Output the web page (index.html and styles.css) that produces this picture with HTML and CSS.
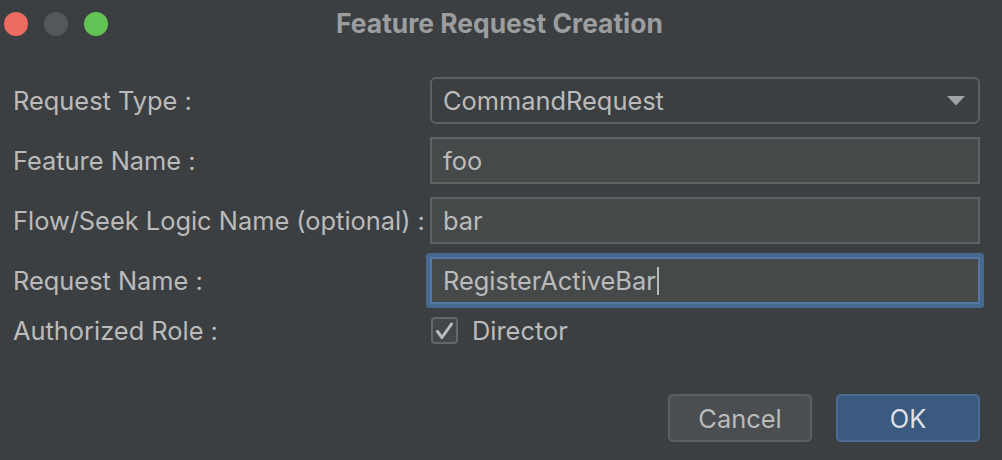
FILE: index.html
```html
<!DOCTYPE html>
<html>
<head>
<meta charset="utf-8">
<link rel="stylesheet" href="styles.css">
</head>
<body>
<div class="window">
  <div class="titlebar">
    <div class="lights">
      <span class="light red"></span>
      <span class="light grey"></span>
      <span class="light green"></span>
    </div>
    <div class="title">Feature Request Creation</div>
    <div></div>
  </div>
  <div class="form">
    <div class="label">Request Type :</div>
    <div class="combo">
      <span>CommandRequest</span>
      <svg class="arrow" width="18" height="10" viewBox="0 0 18 10"><polygon points="0,0 18,0 9,9.5" fill="#a0a3a7"/></svg>
    </div>
    <div class="label">Feature Name :</div>
    <div class="field">foo</div>
    <div class="label">Flow/Seek Logic Name (optional) :</div>
    <div class="field">bar</div>
    <div class="label">Request Name :</div>
    <div class="field focused">RegisterActiveBar<span class="caret"></span></div>
    <div class="label check-label">Authorized Role :</div>
    <div class="check-row">
      <span class="checkbox">
        <svg width="27" height="27" viewBox="0 0 27 27"><polyline points="6.5,14.5 11,20.5 20.5,7" fill="none" stroke="#bbbbbb" stroke-width="3" stroke-linecap="round" stroke-linejoin="round"/></svg>
      </span>
      <span class="check-text">Director</span>
    </div>
  </div>
  <div class="buttons">
    <div class="btn cancel">Cancel</div>
    <div class="btn ok">OK</div>
  </div>
</div>
</body>
</html>
```
FILE: styles.css
```css
html, body {
  margin: 0;
  padding: 0;
  background: #3c3f41;
}
.window {
  width: 1002px;
  height: 460px;
  background: #3c3f41;
  font-family: "Inter", "Noto Sans", sans-serif;
  color: #bbbbbb;
  font-size: 25.4px;
  overflow: hidden;
}
.titlebar {
  height: 45px;
  display: grid;
  grid-template-columns: 1fr auto 1fr;
  align-items: center;
}
.lights {
  display: flex;
  gap: 16px;
  padding-left: 4px;
  padding-top: 3px;
}
.light {
  width: 24px;
  height: 24px;
  border-radius: 50%;
  display: block;
}
.red { background: #ec6a5e; }
.grey { background: #54575b; }
.green { background: #61c454; }
.title {
  font-weight: 700;
  font-size: 26.4px;
  color: #9c9d9f;
  padding-right: 3px;
}
.form {
  display: grid;
  grid-template-columns: 417px 550px;
  grid-template-rows: 47px 47px 47px 47px 28px;
  row-gap: 13px;
  padding: 32px 0 0 13px;
}
.label {
  display: flex;
  align-items: center;
  white-space: nowrap;
}
.combo {
  box-sizing: border-box;
  border: 2px solid #5d6063;
  border-radius: 6px;
  display: flex;
  align-items: center;
  justify-content: space-between;
  padding: 0 13px 0 11px;
}
.field {
  box-sizing: border-box;
  border: 2px solid #5f6163;
  background: #45494a;
  display: flex;
  align-items: center;
  padding: 0 11px;
}
.field.focused {
  border-color: #5479a5;
  box-shadow: 0 0 0 4px #46698f;
  border-radius: 1px;
}
.caret {
  display: inline-block;
  width: 2px;
  height: 28px;
  background: #bbbbbb;
  margin-left: 1px;
}
.check-label, .check-row {
  margin-top: -1px;
}
.check-row {
  display: flex;
  align-items: center;
  gap: 14px;
}
.checkbox {
  box-sizing: border-box;
  width: 27px;
  height: 27px;
  border: 2px solid #646668;
  border-radius: 4px;
  background: #43464a;
  position: relative;
  margin-left: 1px;
}
.checkbox svg {
  position: absolute;
  left: -2px;
  top: -2px;
}
.buttons {
  display: flex;
  justify-content: flex-end;
  gap: 24px;
  padding: 49px 22px 0 0;
}
.btn {
  box-sizing: border-box;
  width: 144px;
  height: 48px;
  border-radius: 5px;
  display: flex;
  align-items: center;
  justify-content: center;
}
.cancel {
  background: #4b4e51;
  border: 2px solid #5d6063;
}
.ok {
  background: #3b5a80;
  border: 2px solid #4a6b93;
  color: #dfe1e4;
}
```
